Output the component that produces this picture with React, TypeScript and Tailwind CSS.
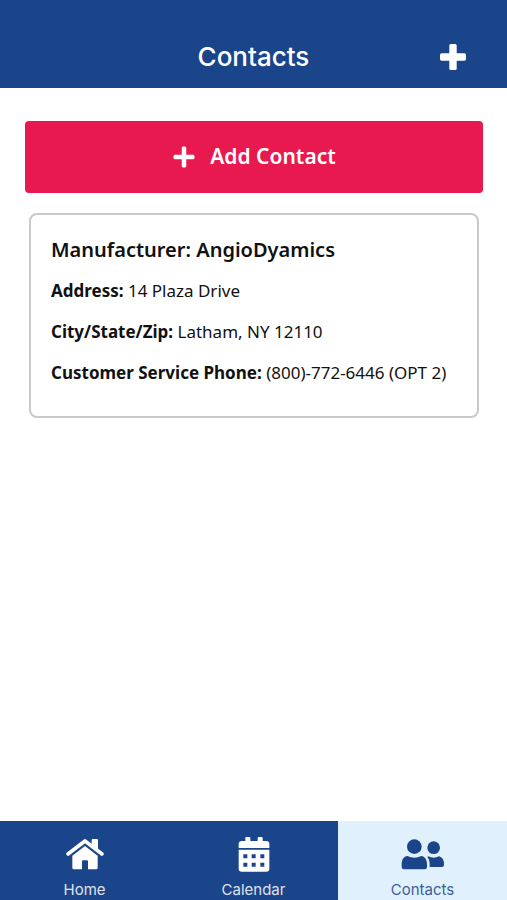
import React, { useState } from "react";
import { FaPlus } from "react-icons/fa";

const HomeIcon: React.FC = () => (
  <svg width="46" height="44" viewBox="0 0 138 132" fill="currentColor" aria-hidden="true">
    <path d="M18 66 69 27l51 39" fill="none" stroke="currentColor" strokeWidth="11" strokeLinecap="round" strokeLinejoin="round" />
    <path d="M92 21h13q3 0 3 3v34L89 44V24q0-3 3-3z" />
    <path d="M69 42l38 29v36q0 5-5 5H78V88q0-3-3-3H63q-3 0-3 3v24H36q-5 0-5-5V71z" />
  </svg>
);

const CalendarIcon: React.FC = () => (
  <svg width="46" height="44" viewBox="-4 0 138 132" fill="currentColor" aria-hidden="true">
    <path d="M19 48V36q0-9 9-9h11v-9q0-3 3-3h9q3 0 3 3v9h22v-9q0-3 3-3h9q3 0 3 3v9h11q9 0 9 9v12z" />
    <path
      fillRule="evenodd"
      d="M19 53h92v57q0 9-9 9H28q-9 0-9-9zM33 67v12h12V67zM58 67v12h12V67zM84 67v12h12V67zM33 92v12h12V92zM58 92v12h12V92zM84 92v12h12V92z"
    />
  </svg>
);

const ContactsIcon: React.FC = () => (
  <svg width="50" height="44" viewBox="0 0 150 132" fill="currentColor" aria-hidden="true">
    <circle cx="49" cy="44" r="22" />
    <circle cx="107" cy="47" r="19" />
    <path d="M28 72q21 10 42 0c12 2 17 12 17 26v7q0 7-7 7H18q-7 0-7-7v-7c0-14 5-24 17-26z" />
    <path d="M91 73q16 8 32 0c11 3 15 13 15 21v5q0 6-6 6H95v-7c0-10-2-17-7-23z" />
  </svg>
);

const details = [
  { label: "Address:", value: "14 Plaza Drive" },
  { label: "City/State/Zip:", value: "Latham, NY 12110" },
  { label: "Customer Service Phone:", value: "(800)-772-6446 (OPT 2)" },
];

const tabs = [
  { name: "Home", icon: <HomeIcon /> },
  { name: "Calendar", icon: <CalendarIcon /> },
  { name: "Contacts", icon: <ContactsIcon /> },
];

const App: React.FC = () => {
  const [active, setActive] = useState("Contacts");

  return (
    <div className="flex min-h-screen flex-col bg-white font-['Noto_Sans',sans-serif] text-[#111111]">
      <header className="grid grid-cols-[1fr_auto_1fr] items-center bg-[#1b458b] px-10 pt-[29px] pb-[3px] font-['Inter',sans-serif] text-white">
        <h1 className="col-start-2 text-[26px] leading-14 font-medium">Contacts</h1>
        <button type="button" aria-label="Add contact" className="cursor-pointer justify-self-end">
          <svg width="28" height="28" viewBox="0 0 28 28" fill="currentColor" aria-hidden="true">
            <rect x="1" y="10.3" width="26" height="7.4" rx="1.6" />
            <rect x="10.3" y="1" width="7.4" height="26" rx="1.6" />
          </svg>
        </button>
      </header>

      <main className="flex-1 pt-[33px] pr-6 pl-[25px]">
        <button
          type="button"
          className="flex h-18 w-full cursor-pointer items-center justify-center gap-3.5 rounded bg-[#e8194f] text-[21px] font-semibold text-white"
        >
          <FaPlus size={24} />
          Add Contact
        </button>

        <section className="mx-1 mt-5 rounded-lg border-2 border-[#c9c9c9] px-5 pt-[15px] pb-[23px]">
          <h2 className="text-[20px] leading-10 font-semibold">Manufacturer: AngioDyamics</h2>
          {details.map((item) => (
            <p key={item.label} className="text-[17px] leading-[41px]">
              <strong className="font-bold">{item.label}</strong> {item.value}
            </p>
          ))}
        </section>
      </main>

      <nav className="grid grid-cols-3 font-['Inter',sans-serif]">
        {tabs.map((tab) => (
          <button
            key={tab.name}
            type="button"
            onClick={() => setActive(tab.name)}
            className={
              active === tab.name
                ? "flex cursor-pointer flex-col items-center gap-1 bg-[#e0f1fd] pt-[11px] text-[#1b458b]"
                : "flex cursor-pointer flex-col items-center gap-1 bg-[#1b458b] pt-[11px] text-white"
            }
          >
            {tab.icon}
            <span className="text-[15px] leading-5 opacity-85">{tab.name}</span>
          </button>
        ))}
      </nav>
    </div>
  );
};

export default App;
